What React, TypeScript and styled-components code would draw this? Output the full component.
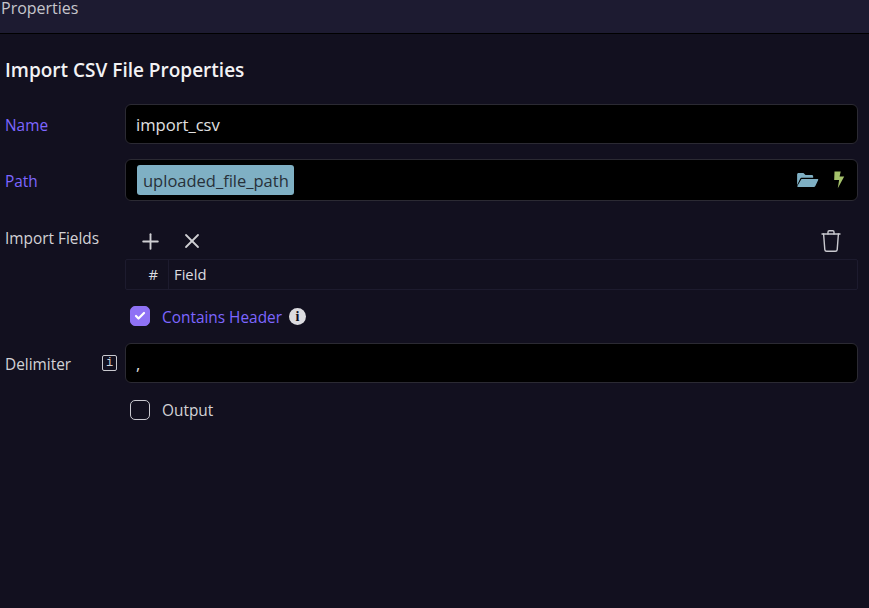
import React from 'react';
import styled, { createGlobalStyle } from 'styled-components';
import { Check, Plus, X } from 'lucide-react';

const Global = createGlobalStyle`
    html, body {
        margin:0;
        height:100%;
        background-color:#12101f;
    }
    #root {
        height:100%;
    }
`

const App: React.FC = () => {
    return (
        <Wrapper>
            <Global />
            <Header>Properties</Header>
            <Body>
                <Title>Import CSV File Properties</Title>
                <Row $top={0} $height={40}>
                    <Label $accent $shift={2}>Name</Label>
                    <Input>import_csv</Input>
                </Row>
                <Row $top={15} $height={42}>
                    <Label $accent $shift={2}>Path</Label>
                    <PathInput>
                        <Chip>uploaded_file_path</Chip>
                        <PathIcons>
                            <FolderSvg width="23" height="17" viewBox="0 0 24 18">
                                <path fill="#7fb0c4" d="M1 14V2.6C1 1.7 1.6 1 2.5 1h5.2l2.2 2.2h6.6c.9 0 1.5.6 1.5 1.5V6H6.2c-1 0-1.7.5-2.1 1.3z" />
                                <path fill="#7fb0c4" d="M5.6 7.4h17c.6 0 1 .6.7 1.2l-3 6.3c-.3.6-.9 1-1.6 1H1.9c-.6 0-.9-.5-.7-1z" />
                            </FolderSvg>
                            <svg width="12" height="18" viewBox="0 0 12 18">
                                <path fill="#a5c26b" d="M1.5 .5h6.2L6.6 5.6h4.6L4.8 17.3l1.3-8.2H1.2z" />
                            </svg>
                        </PathIcons>
                    </PathInput>
                </Row>
                <FieldsRow>
                    <FieldsLabel>Import Fields</FieldsLabel>
                    <div>
                        <Toolbar>
                            <ToolGroup>
                                <Plus size={25} strokeWidth={1.8} />
                                <X size={24} strokeWidth={1.8} />
                            </ToolGroup>
                            <TrashIcon />
                        </Toolbar>
                        <Table>
                            <NumCell>#</NumCell>
                            <FieldCell>Field</FieldCell>
                        </Table>
                    </div>
                </FieldsRow>
                <CheckRow $top={16}>
                    <Box $checked>
                        <Check size={12} strokeWidth={4.5} color="#fff" />
                    </Box>
                    <CheckText $accent>Contains Header</CheckText>
                    <InfoDot>i</InfoDot>
                </CheckRow>
                <Row $top={17} $height={40}>
                    <DelimiterLabel>
                        <Label $shift={2}>Delimiter</Label>
                        <InfoSquare>i</InfoSquare>
                    </DelimiterLabel>
                    <Input>,</Input>
                </Row>
                <CheckRow $top={17}>
                    <Box />
                    <CheckText>Output</CheckText>
                </CheckRow>
            </Body>
        </Wrapper>
    )
};

const TrashIcon: React.FC = () => (
    <TrashSvg width="22" height="24" viewBox="0 0 22 24" fill="none" stroke="#c9c9cf" strokeWidth="1.4" strokeLinecap="round" strokeLinejoin="round">
        <path d="M2 5h18" />
        <path d="M8 5V3c0-.8.5-1.3 1.2-1.3h3.6c.7 0 1.2.5 1.2 1.3v2" />
        <path d="M3.6 5l1.2 15.6c.1 1 .8 1.7 1.8 1.7h8.8c1 0 1.7-.7 1.8-1.7L18.4 5" />
    </TrashSvg>
);

export default App;

const Wrapper = styled.div`
    font-family:'Open Sans', 'Noto Sans', sans-serif;
    width:869px;
    height:608px;
    overflow:hidden;
    background-color:#12101f;
    color:#d8d8dc;
`
const Header = styled.div`
    height:33px;
    box-sizing:content-box;
    background-color:#1d1b31;
    border-bottom:1px solid #000000;
    padding-left:1px;
    font-size:16px;
    line-height:17px;
    color:#c6c6cc;
`
const Body = styled.div`
    padding:0 11px 0 5px;
`
const Title = styled.h2`
    margin:0;
    padding-top:23px;
    height:70px;
    box-sizing:border-box;
    font-size:19px;
    line-height:26px;
    font-weight:600;
    color:#f2f2f4;
`
const Row = styled.div<{ $top: number; $height: number }>`
    display:grid;
    grid-template-columns:120px 1fr;
    align-items:center;
    margin-top:${p => p.$top}px;
    height:${p => p.$height}px;
`
const Label = styled.span<{ $accent?: boolean; $shift?: number }>`
    padding-top:${p => p.$shift ?? 0}px;
    font-size:15.4px;
    color:${p => (p.$accent ? '#7d66ff' : '#d2d2d6')};
`
const Input = styled.div`
    display:flex;
    align-items:center;
    height:100%;
    box-sizing:border-box;
    padding:1px 0 0 10px;
    background-color:#000000;
    border:1px solid #2b2a33;
    border-radius:6px;
    font-size:16.6px;
    color:#e0e0e2;
`
const PathInput = styled(Input)`
    justify-content:space-between;
    padding:0 12px 0 11px;
`
const Chip = styled.span`
    height:30px;
    line-height:32px;
    padding:0 5px 0 6px;
    border-radius:3px;
    background-color:#7fb0c4;
    color:#27313a;
    font-size:16.5px;
`
const PathIcons = styled.div`
    display:flex;
    align-items:center;
    gap:14px;
`
const FolderSvg = styled.svg`
    margin-top:1px;
`
const FieldsRow = styled.div`
    display:grid;
    grid-template-columns:120px 1fr;
    margin-top:22px;
`
const FieldsLabel = styled(Label)`
    line-height:28px;
    padding-top:2px;
`
const Toolbar = styled.div`
    display:flex;
    align-items:center;
    justify-content:space-between;
    height:36px;
    padding:0 16px 0 13px;
    color:#cfcfd3;
`
const ToolGroup = styled.div`
    display:flex;
    align-items:center;
    gap:17px;
`
const TrashSvg = styled.svg`
    display:block;
`
const Table = styled.div`
    display:grid;
    grid-template-columns:43px 1fr;
    height:31px;
    box-sizing:border-box;
    border:1px solid #1d1b2e;
    border-radius:2px;
    font-size:14.8px;
    line-height:29px;
    color:#dcdce0;
`
const NumCell = styled.div`
    text-align:right;
    padding-right:10px;
    border-right:1px solid #1d1b2e;
`
const FieldCell = styled.div`
    padding-left:5px;
`
const CheckRow = styled.div<{ $top: number }>`
    display:flex;
    align-items:center;
    height:20px;
    margin-top:${p => p.$top}px;
    margin-left:120px;
`
const Box = styled.span<{ $checked?: boolean }>`
    display:flex;
    align-items:center;
    justify-content:center;
    width:20px;
    height:20px;
    box-sizing:border-box;
    margin-left:5px;
    border-radius:5px;
    background-color:${p => (p.$checked ? '#8f72f5' : 'transparent')};
    border:1px solid ${p => (p.$checked ? '#8f72f5' : '#c9c9cf')};
`
const CheckText = styled.span<{ $accent?: boolean }>`
    margin-left:12px;
    padding-top:${p => (p.$accent ? 2 : 0)}px;
    font-size:15.4px;
    color:${p => (p.$accent ? '#7d66ff' : '#d2d2d6')};
`
const InfoDot = styled.span`
    width:17px;
    height:17px;
    margin-left:7px;
    border-radius:50%;
    background-color:#dcdce0;
    color:#12101f;
    font-family:'Liberation Serif', serif;
    font-weight:700;
    font-size:14px;
    line-height:17px;
    text-align:center;
`
const DelimiterLabel = styled.div`
    display:flex;
    align-items:center;
    justify-content:space-between;
    padding-right:8px;
`
const InfoSquare = styled.span`
    width:15px;
    height:16px;
    box-sizing:border-box;
    border:1px solid #c9c9cf;
    border-radius:2px;
    font-family:'Liberation Mono', monospace;
    font-size:12px;
    line-height:14px;
    text-align:center;
    color:#d2d2d6;
`
